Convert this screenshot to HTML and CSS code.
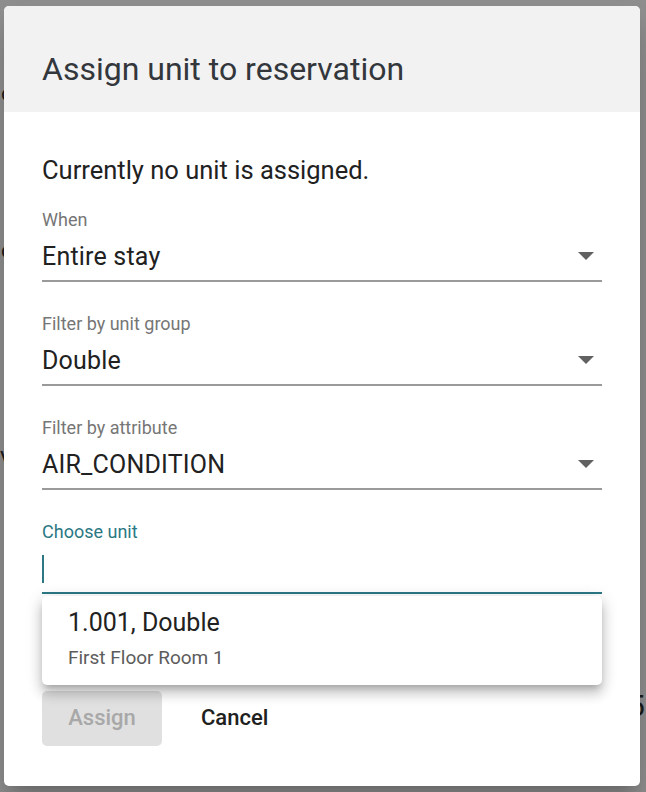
FILE: index.html
```html
<!DOCTYPE html>
<html lang="en">
<head>
<meta charset="utf-8">
<title>Assign unit to reservation</title>
<link rel="stylesheet" href="styles.css">
</head>
<body>
<div class="page">
  <div class="bg-glyph bg-g1">o</div>
  <div class="bg-glyph bg-g2">o</div>
  <div class="bg-glyph bg-g3">V</div>
  <div class="bg-glyph bg-g4">5</div>
</div>

<div class="dialog" role="dialog">
  <header class="dialog-header">
    <h1 class="dialog-title">Assign unit to reservation</h1>
  </header>
  <div class="dialog-body">
    <p class="status">Currently no unit is assigned.</p>

    <div class="field">
      <div class="field-label">When</div>
      <div class="field-row">
        <span class="field-value">Entire stay</span>
        <svg class="arrow" viewBox="0 0 16 8" width="16" height="8"><path d="M0 0h16L8 8z"/></svg>
      </div>
    </div>

    <div class="field">
      <div class="field-label">Filter by unit group</div>
      <div class="field-row">
        <span class="field-value">Double</span>
        <svg class="arrow" viewBox="0 0 16 8" width="16" height="8"><path d="M0 0h16L8 8z"/></svg>
      </div>
    </div>

    <div class="field">
      <div class="field-label">Filter by attribute</div>
      <div class="field-row">
        <span class="field-value">AIR_CONDITION</span>
        <svg class="arrow" viewBox="0 0 16 8" width="16" height="8"><path d="M0 0h16L8 8z"/></svg>
      </div>
    </div>

    <div class="field field-focused">
      <div class="field-label">Choose unit</div>
      <div class="field-row">
        <span class="caret"></span>
      </div>
      <div class="menu">
        <div class="menu-item">
          <div class="menu-primary">1.001, Double</div>
          <div class="menu-secondary">First Floor Room 1</div>
        </div>
      </div>
    </div>

    <div class="actions">
      <button class="btn btn-disabled" type="button">Assign</button>
      <button class="btn btn-text" type="button">Cancel</button>
    </div>
  </div>
</div>
</body>
</html>
```

FILE: styles.css
```css
html, body {
  margin: 0;
  padding: 0;
}

body {
  background: #8f8f8f;
  font-family: Roboto, "Liberation Sans", Arial, sans-serif;
  width: 646px;
  height: 792px;
  overflow: hidden;
  position: relative;
}

.page {
  position: relative;
  width: 646px;
  height: 792px;
}

.bg-glyph {
  position: absolute;
  color: #1c1c1c;
  font-size: 22px;
  line-height: 24px;
}
.bg-g1 { left: 1px; top: 82px; }
.bg-g2 { left: 1px; top: 239px; }
.bg-g3 { left: 0; top: 448px; }
.bg-g4 { left: 628px; top: 690px; font-size: 30px; line-height: 32px; }

.dialog {
  position: absolute;
  left: 4px;
  top: 6px;
  width: 636px;
  height: 780px;
  background: #ffffff;
  border-radius: 5px;
  box-shadow: 0 11px 15px -7px rgba(0,0,0,0.2), 0 24px 38px 3px rgba(0,0,0,0.14);
  display: flex;
  flex-direction: column;
  z-index: 1;
}

.dialog-header {
  background: #f2f2f2;
  height: 106px;
  box-sizing: border-box;
  padding: 43px 38px 0;
  border-radius: 5px 5px 0 0;
}

.dialog-title {
  margin: 0;
  font-size: 32px;
  line-height: 40px;
  font-weight: 400;
  color: #33373c;
}

.dialog-body {
  padding: 43px 38px 40px;
  display: flex;
  flex-direction: column;
}

.status {
  margin: 0 0 24px;
  font-size: 25.5px;
  line-height: 30px;
  color: #212121;
}

.field {
  position: relative;
  margin-bottom: 31px;
  border-bottom: 2px solid #9a9a9a;
  padding-bottom: 8px;
}

.field-label {
  font-size: 18px;
  line-height: 22px;
  color: #767676;
}

.field-row {
  margin-top: 10px;
  height: 31px;
  display: flex;
  align-items: center;
}

.field-value {
  flex: 1;
  font-size: 25px;
  line-height: 31px;
  letter-spacing: 0.2px;
  color: #212121;
}

.arrow {
  fill: #616161;
  margin-right: 8px;
  margin-top: -2px;
}

.field-focused {
  border-bottom-color: #2b7884;
  margin-bottom: 97px;
}

.field-focused .field-label {
  color: #2b7884;
}

.caret {
  width: 2px;
  height: 28px;
  background: #2b7884;
}

.menu {
  position: absolute;
  left: 0;
  right: 0;
  top: 75px;
  background: #ffffff;
  border-radius: 5px;
  box-shadow: 0 5px 6px -3px rgba(0,0,0,0.2), 0 9px 12px 1px rgba(0,0,0,0.14), 0 3px 16px 2px rgba(0,0,0,0.12);
  z-index: 2;
}

.menu-item {
  padding: 12px 26px 15px;
}

.menu-primary {
  font-size: 25px;
  line-height: 30px;
  color: #212121;
}

.menu-secondary {
  margin-top: 8px;
  font-size: 19px;
  line-height: 24px;
  color: #5c5c5c;
}

.actions {
  display: flex;
  gap: 13px;
}

.btn {
  font-family: Roboto, "Liberation Sans", Arial, sans-serif;
  font-size: 22px;
  font-weight: 500;
  height: 55px;
  line-height: 53px;
  padding: 0 26px 2px;
  border: none;
  border-radius: 5px;
  background: transparent;
  cursor: pointer;
}

.btn-disabled {
  width: 120px;
  background: #e0e0e0;
  color: #a8a8a8;
  cursor: default;
}

.btn-text {
  color: #202020;
}
```
